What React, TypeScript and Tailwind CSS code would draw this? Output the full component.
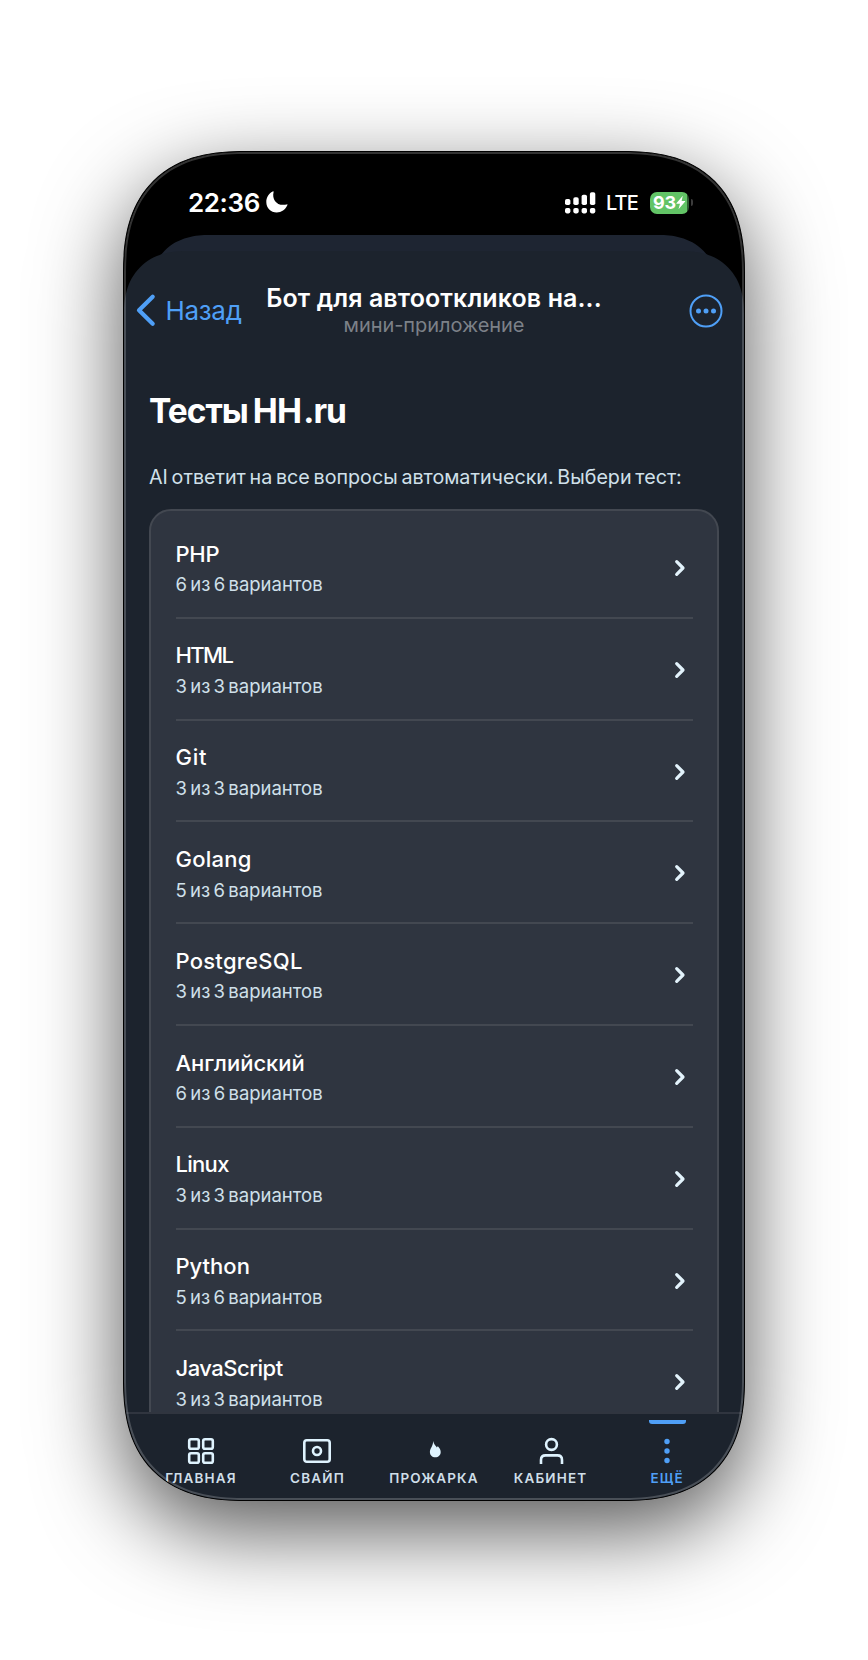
import type { ReactNode } from "react";

type Test = { name: string; detail: string; tracking: string };

const tests: Test[] = [
  { name: "PHP", detail: "6 из 6 вариантов", tracking: "tracking-[-0.3px]" },
  { name: "HTML", detail: "3 из 3 вариантов", tracking: "tracking-[-1.6px]" },
  { name: "Git", detail: "3 из 3 вариантов", tracking: "tracking-[0.7px]" },
  { name: "Golang", detail: "5 из 6 вариантов", tracking: "tracking-[0.25px]" },
  { name: "PostgreSQL", detail: "3 из 3 вариантов", tracking: "tracking-[0.25px]" },
  { name: "Английский", detail: "6 из 6 вариантов", tracking: "tracking-[0px]" },
  { name: "Linux", detail: "3 из 3 вариантов", tracking: "tracking-[-0.7px]" },
  { name: "Python", detail: "5 из 6 вариантов", tracking: "tracking-[0px]" },
  { name: "JavaScript", detail: "3 из 3 вариантов", tracking: "tracking-[-0.5px]" },
];

function StatusBar() {
  return (
    <div className="relative h-[99px] shrink-0">
      <div className="absolute top-[83px] left-[25px] h-[60px] w-[570px] rounded-t-[68px] bg-[#1e2532] [corner-shape:superellipse(1.2)]" />
      <div className="relative flex items-center justify-between pt-9 pr-[51px] pl-[63px] text-white">
        <div className="flex h-[29px] items-center">
          <span className="w-[79px] pl-px text-[26px] font-semibold tracking-[-0.4px]">22:36</span>
          <svg width="22" height="22" viewBox="0 0 22 22" className="mb-px" fill="#fff">
            <path d="M7.6 0.9C5.6 8.600 11.200 15.800 20.700 13.400C21.300 13.250 21.700 13.700 21.300 14.300C19.400 18.700 15.400 21.500 10.700 21.500C4.800 21.500 0.300 17 0.300 11C0.300 6.500 2.800 2.500 6.700 0.500C7.300 0.200 7.750 0.400 7.600 0.900Z" />
          </svg>
        </div>
        <div className="flex h-[29px] items-center">
          <svg width="31" height="22" viewBox="0 0 31 22" fill="#fff">
            <rect x="0" y="7" width="5.400" height="6" rx="1.800" />
            <rect x="8.300" y="5.300" width="5.400" height="7.700" rx="1.800" />
            <rect x="16.600" y="2.800" width="5.400" height="10.200" rx="1.800" />
            <rect x="24.900" y="0.300" width="5.400" height="12.700" rx="1.800" />
            <rect x="0" y="16" width="5.400" height="5.400" rx="1.800" />
            <rect x="8.300" y="16" width="5.400" height="5.400" rx="1.800" />
            <rect x="16.600" y="16" width="5.400" height="5.400" rx="1.800" />
            <rect x="24.900" y="16" width="5.400" height="5.400" rx="1.800" />
          </svg>
          <span className="ml-[10px] w-[44px] text-[20px] leading-[28px] font-medium tracking-[-0.9px]">LTE</span>
          <div className="flex items-center">
            <div className="flex h-[22px] w-[39px] items-center rounded-[7px] bg-[linear-gradient(90deg,#62c466_36.5px,#2f5f33_36.5px)] pl-[3px]">
              <span className="text-[18px] leading-none font-bold tracking-[-0.1px]">93</span>
              <svg width="10" height="15" viewBox="0 0 10 15" fill="#fff">
                <path d="M6.800 0.800L0.400 8.300Q0.200 8.800 0.800 8.800H4L2.500 14.200L9.200 6.500Q9.500 5.900 8.800 5.900H5.600Z" />
              </svg>
            </div>
            <div className="ml-[1.500px] h-[7px] w-[2.500px] rounded-r-full bg-[#3c3c3c]" />
          </div>
        </div>
      </div>
    </div>
  );
}

function Header() {
  return (
    <header className="relative flex h-[109px] shrink-0 justify-between pr-[21.500px] pl-[10.500px]">
      <div className="flex h-[118px] items-center text-[#4f9ff6]">
        <svg width="22" height="34" viewBox="0 0 22 34" fill="none" stroke="currentColor" strokeWidth="4.200" strokeLinecap="round" strokeLinejoin="round">
          <path d="M17.700 3.700L4 17.200L17.700 30.800" />
        </svg>
        <span className="ml-[9px] text-[26px] tracking-[-0.3px]">Назад</span>
      </div>
      <div className="absolute inset-x-0 top-[33px] text-center">
        <div className="text-[25px] leading-[28px] font-semibold tracking-[0.100px] text-white">Бот для автооткликов на...</div>
        <div className="text-[20px] leading-[26px] tracking-[-0.050px] text-[#7c8188]">мини-приложение</div>
      </div>
      <div className="flex h-[120px] items-center">
        <svg width="34" height="34" viewBox="0 0 34 34" fill="#4f9ff6">
          <circle cx="17" cy="17" r="15.500" fill="none" stroke="#4f9ff6" strokeWidth="2" />
          <circle cx="9.500" cy="17" r="2.500" />
          <circle cx="17" cy="17" r="2.500" />
          <circle cx="24.500" cy="17" r="2.500" />
        </svg>
      </div>
    </header>
  );
}

function TestRow({ test, last }: { test: Test; last: boolean }) {
  return (
    <div className={`flex h-[101.800px] items-start justify-between pt-[21.600px] ${last ? "" : "border-b-2 border-[#434851]"}`}>
      <div>
        <div className={`text-[22px] leading-[30px] font-medium text-white ${test.tracking}`}>{test.name}</div>
        <div className="mt-[3.600px] text-[18.500px] leading-[24px] [word-spacing:-1.900px] text-[#d0e0ea]">{test.detail}</div>
      </div>
      <svg width="12" height="18" viewBox="0 0 12 18" className="mt-[20.500px] mr-[6.500px]" fill="none" stroke="#e3f3fc" strokeWidth="3.200" strokeLinecap="round" strokeLinejoin="round">
        <path d="M2.700 2.700L9 9L2.700 15.300" />
      </svg>
    </div>
  );
}

function NavItem({ label, active, children }: { label: string; active?: boolean; children: ReactNode }) {
  return (
    <div className={`relative flex flex-1 flex-col items-center pt-[23px] ${active ? "text-[#4f9ff6]" : "text-[#dff3fe]"}`}>
      {active && <div className="absolute top-[6px] h-[3.500px] w-[37px] rounded-b-[3px] bg-[#4f9ff6]" />}
      <svg width="28" height="28" viewBox="0 0 28 28" fill="none" stroke="currentColor" strokeWidth="2.600">
        {children}
      </svg>
      <span className={`mt-[5px] text-[13.500px] leading-[16px] font-semibold tracking-[1.150px] ${active ? "" : "text-[#cfdee8]"}`}>{label}</span>
    </div>
  );
}

export default function App() {
  return (
    <div className="flex h-[1660px] w-[868px] justify-center bg-white pt-[151px] font-['Inter','Noto_Sans',sans-serif]">
      <div className="relative flex h-[1350px] w-[622px] flex-col overflow-hidden rounded-[122px] border border-black bg-black shadow-[0_29px_86px_rgba(0,0,0,0.67)] [corner-shape:superellipse(1.3)]">
        <StatusBar />
        <div className="relative flex min-h-0 flex-1 flex-col rounded-t-[62px] bg-[#1c232d] [corner-shape:superellipse(1.2)]">
          <Header />
          <main className="min-h-0 flex-1 overflow-hidden px-[25px] pt-[31px]">
            <h1 className="flex h-10 items-center text-[33.500px] leading-[40px] font-bold text-white">
              <span className="tracking-[-1px]">Тесты</span>
              <span className="ml-[5px] tracking-[-0.800px]">HH</span>
              <span className="ml-[2px] tracking-[-1px]">.ru</span>
            </h1>
            <p className="mt-8 text-[19.700px] leading-[28px] whitespace-nowrap [word-spacing:-1.800px] text-[#d0e0ea]">
              AI ответит на все вопросы автоматически. Выбери тест:
            </p>
            <div className="mt-[18px] rounded-t-[22px] border-2 border-[#434851] bg-[#2f3540] px-[24.500px] pt-[6px]">
              {tests.map((test, i) => (
                <TestRow key={test.name} test={test} last={i === tests.length - 1} />
              ))}
            </div>
          </main>
          <nav className="flex h-[88px] shrink-0 border-t-2 border-[#30353f] bg-[#1c232d] px-[18.700px]">
            <NavItem label="ГЛАВНАЯ">
              <rect x="2.200" y="2.200" width="9.600" height="9.600" rx="1.800" />
              <rect x="16.200" y="2.200" width="9.600" height="9.600" rx="1.800" />
              <rect x="2.200" y="16.200" width="9.600" height="9.600" rx="1.800" />
              <rect x="16.200" y="16.200" width="9.600" height="9.600" rx="1.800" />
            </NavItem>
            <NavItem label="СВАЙП">
              <rect x="1.300" y="3.200" width="25.400" height="21.600" rx="2.500" />
              <circle cx="14" cy="14" r="4" />
            </NavItem>
            <NavItem label="ПРОЖАРКА">
              <path d="M13.200 4C13.700 7.500 16 8.800 16.900 10.600C17.200 10 17.300 9.600 17.900 9.300C19.700 11.200 20.700 12.800 20.700 15C20.700 18.200 18.400 20.300 15.300 20.300C12.100 20.300 9.900 18.100 9.900 15C9.900 11.200 13 9.500 13.200 4Z" fill="currentColor" stroke="none" />
            </NavItem>
            <NavItem label="КАБИНЕТ">
              <circle cx="14.500" cy="7.500" r="5.400" />
              <path d="M4 27V23C4 20.100 5.700 18.400 8.600 18.400H20.400C23.300 18.400 25 20.100 25 23V27" />
            </NavItem>
            <NavItem label="ЕЩЁ" active>
              <circle cx="14" cy="4.500" r="2.700" fill="currentColor" stroke="none" />
              <circle cx="14" cy="14" r="2.700" fill="currentColor" stroke="none" />
              <circle cx="14" cy="23.500" r="2.700" fill="currentColor" stroke="none" />
            </NavItem>
          </nav>
        </div>
        <div className="pointer-events-none absolute inset-0 rounded-[121px] border-2 border-white/20 [corner-shape:superellipse(1.3)]" />
      </div>
    </div>
  );
}
